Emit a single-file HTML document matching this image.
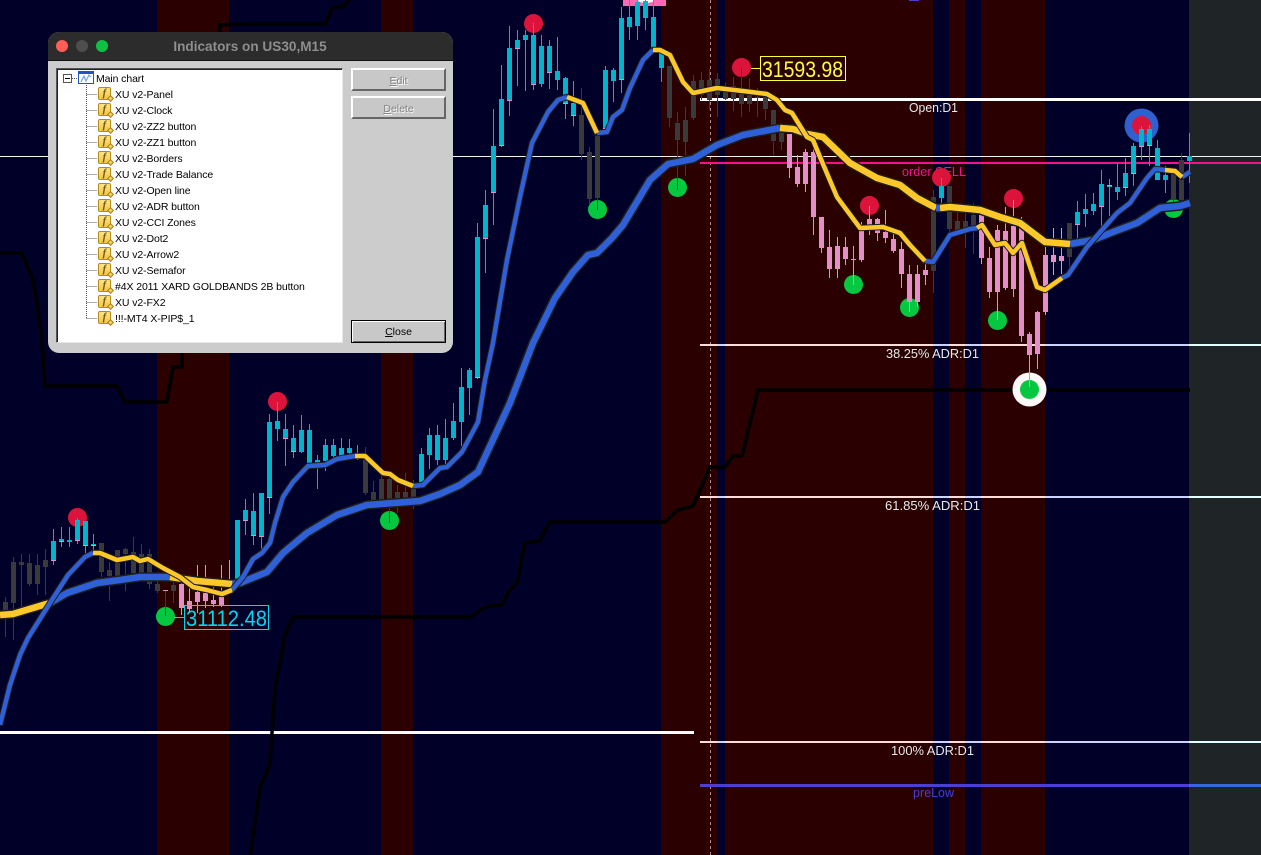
<!DOCTYPE html>
<html lang="en">
<head>
<meta charset="utf-8">
<title>Indicators on US30,M15</title>
<style>
html,body{margin:0;padding:0;width:1261px;height:855px;overflow:hidden;background:#000028}
svg.c{position:absolute;left:0;top:0}
svg.c text{font-family:"Liberation Sans",sans-serif}
#dlg{position:absolute;left:48px;top:32px;width:405px;height:321px;background:#cccccc;border-radius:11px;overflow:hidden;font-family:"Liberation Sans",sans-serif;color:#000}
#bar{position:absolute;left:0;top:0;width:405px;height:28px;background:#2c2c2c;border-bottom:1px solid #111;box-sizing:content-box}
#ttl{position:absolute;left:0;top:7px;width:404px;text-align:center;font-size:13.6px;font-weight:bold;line-height:15px;color:#8e8e8e}
.d{position:absolute;top:8px;width:12px;height:12px;border-radius:50%}
#tree{position:absolute;left:8px;top:36px;width:287px;height:275px;box-sizing:border-box;background:#fff;border:1px solid;border-color:#555 #e8e8e8 #e8e8e8 #555;box-shadow:inset 1px 1px 0 #222}
.r{position:absolute;font-size:10.5px;line-height:14px;margin-top:1px;white-space:nowrap;letter-spacing:-.1px}
.i{position:absolute;left:41px;width:13px;height:13px;box-sizing:border-box;background:linear-gradient(#fde68a,#f2c64a);border:1px solid #b88a1c;border-radius:2px;font:italic bold 11px/11px "Liberation Serif",serif;color:#7a5a10;text-align:center}
.i:after{content:"";position:absolute;right:-3px;bottom:-2px;width:5px;height:5px;box-sizing:border-box;background:#f6cf55;border:1px solid #a87f1c;transform:rotate(45deg)}
.b{position:absolute;left:303px;width:95px;height:23px;box-sizing:border-box;background:#c8c8c8;border:2px solid;border-color:#fff #666 #666 #fff;font-size:10.5px;line-height:22px;text-align:center}
.dis{color:#808080;text-shadow:1px 1px 0 #fff}
</style>
</head>
<body>
<svg class="c" width="1261" height="855" viewBox="0 0 1261 855" xmlns="http://www.w3.org/2000/svg">
<rect width="1261" height="855" fill="#000028"/>
<g fill="#2b0000" shape-rendering="crispEdges">
<rect x="157" width="72" height="855"/><rect x="381" width="32" height="855"/><rect x="661" width="56" height="855"/><rect x="725" width="208" height="855"/><rect x="949" width="16" height="855"/><rect x="981" width="64" height="855"/>
</g>
<rect x="1189" width="72" height="855" fill="#1f2526"/>
<path d="M710.5 0V855" stroke="#b58a8a" stroke-width="1" stroke-dasharray="3 3" shape-rendering="crispEdges"/>

<g fill="none" shape-rendering="crispEdges">
<path d="M0 156.5H1261" stroke="#f2f2f2" stroke-width="1"/>
<path d="M700 99.5H1261" stroke="#fff" stroke-width="3"/>
<path d="M700 163H1261" stroke="#f0148c" stroke-width="2"/>
<path d="M700 345H1261M700 497H1261M700 742H1261" stroke="#ffdcd5" stroke-width="2"/>
<path d="M717 345h8M933 345h16M965 345h16M1045 345h144M717 497h8M933 497h16M965 497h16M1045 497h144M717 742h8M933 742h16M965 742h16M1045 742h144" stroke="#c8d4ff" stroke-width="2"/>
<path d="M1189 345h72M1189 497h72M1189 742h72" stroke="#e4ffff" stroke-width="2"/>
<path d="M700 785.5H1189" stroke="#4a3fd0" stroke-width="3"/>
<path d="M1189 785.5h72" stroke="#3468dc" stroke-width="3"/>
<path d="M0 732.5H694" stroke="#fff" stroke-width="3"/>
<path d="M909 0.5h10" stroke="#4a3fd0" stroke-width="1"/>
</g>

<g font-size="13" fill="#e8e8e8">
<text x="909" y="112" textLength="49" lengthAdjust="spacingAndGlyphs">Open:D1</text>
<text x="886" y="358" textLength="93" lengthAdjust="spacingAndGlyphs">38.25% ADR:D1</text>
<text x="885" y="510" textLength="95" lengthAdjust="spacingAndGlyphs">61.85% ADR:D1</text>
<text x="891" y="755" textLength="83" lengthAdjust="spacingAndGlyphs">100% ADR:D1</text>
<text x="913" y="797" textLength="41" lengthAdjust="spacingAndGlyphs" fill="#4a3fd0">preLow</text>
<text x="902" y="176" textLength="64" lengthAdjust="spacingAndGlyphs" fill="#f0148c">order SELL</text>
</g>

<path d="M220 32V25L245 24H325L333 7H343L351 -2M0 253H22L32 277L37 303L42 340L45 386H117L125 402H167L173 367H182V345M250 857L260 787L270 765L272 733L275 687L280 663L285 635L293 617H471L485 607L502 605L509 591L517 583L525 543L540 541L550 522H665L678 510L693 506L710 467H725L733 456H742L758 390H1190" fill="none" stroke="#000" stroke-width="3.5" stroke-linejoin="round"/>

<rect x="623" y="0" width="43" height="6" fill="#ff69b4"/>
<ellipse cx="646" cy="0" rx="8" ry="3" fill="#fff"/>

<g fill="#dc143c">
<circle cx="533.5" cy="23.5" r="9.5"/><circle cx="741.5" cy="67.5" r="9.5"/><circle cx="77.5" cy="517.5" r="9.5"/><circle cx="277.5" cy="401.5" r="9.5"/><circle cx="869.5" cy="205.5" r="9.5"/><circle cx="941.5" cy="177.5" r="9.5"/><circle cx="1013.5" cy="198.5" r="9.5"/>
</g>
<circle cx="1141.5" cy="125.5" r="17" fill="#3060d0"/><circle cx="1141.5" cy="125.5" r="9.5" fill="#dc143c"/>
<circle cx="1029.5" cy="389.5" r="17" fill="#fff8f8"/>
<g fill="#05c840">
<circle cx="1029.5" cy="389.5" r="9.5"/><circle cx="597.5" cy="209.5" r="9.5"/><circle cx="677.5" cy="187.5" r="9.5"/><circle cx="165.5" cy="616.5" r="9.5"/><circle cx="389.5" cy="520.5" r="9.5"/><circle cx="853.5" cy="284.5" r="9.5"/><circle cx="909.5" cy="307.5" r="9.5"/><circle cx="997.5" cy="320.5" r="9.5"/><circle cx="1173.5" cy="208.5" r="9.5"/>
</g>

<g fill="none" shape-rendering="crispEdges">
<!-- dark wicks -->
<path stroke="#3a3a3a" stroke-width="1" d="M5.5 597V637M13.5 557V640M21.5 554V607M29.5 554V586M37.5 554V595M45.5 549V595M101.5 543V577M109.5 562V601M117.5 550V578M125.5 548V591M133.5 537V576M141.5 544V578M149.5 549V589M157.5 575V593M165.5 590V616M173.5 575V603M365.5 447V495M373.5 481V505M381.5 475V502M389.5 475V523M397.5 485V513M405.5 473V500M413.5 480V509M581.5 88V160M589.5 147V205M597.5 130V210M669.5 66V127M677.5 112V190M685.5 107V176M693.5 75V120M701.5 72V100M709.5 69V110M717.5 73V117M725.5 83V100M733.5 77V111M741.5 68V117M749.5 78V112M757.5 88V117M765.5 90V120M773.5 110V155M781.5 130V150M933.5 190V293M949.5 186V240M957.5 205V236M965.5 205V248M973.5 203V254M1069.5 223V268M1173.5 170V205M1181.5 153V205"/>
<!-- dark bodies -->
<path stroke="#3a3a3a" stroke-width="5" d="M5.5 602V611M13.5 562V603M21.5 562V565M29.5 563V584M37.5 565V584M45.5 560V567M101.5 543V572M109.5 570V576M117.5 550V576M125.5 549V554M133.5 552V573M141.5 554V573M149.5 554V584M157.5 584V591M173.5 585V591M365.5 458V493M373.5 492V500M381.5 479V500M389.5 479V500M397.5 492V498M405.5 492V498M413.5 488V497M581.5 115V154M589.5 152V199M597.5 134V198M669.5 66V118M677.5 123V140M685.5 120V142M693.5 81V118M701.5 80V95M709.5 80V100M717.5 79V95M725.5 88V99M733.5 86V99M741.5 92V104M749.5 95V104M757.5 97V98M765.5 97V109M773.5 110V141M781.5 130V142M933.5 197V271M949.5 186V229M957.5 221V230M965.5 221V229M973.5 215V228M1069.5 223V257M1173.5 170V200M1181.5 160V200"/>
<!-- pink wicks -->
<path stroke="#e38fc8" stroke-width="1" d="M181.5 580V615M189.5 587V613M197.5 565V613M205.5 565V608M213.5 581V607M221.5 565V607M229.5 560V583M789.5 134V178M797.5 155V187M805.5 149V192M813.5 149V235M821.5 217V253M829.5 230V278M837.5 237V278M845.5 237V265M853.5 246V285M861.5 222V262M869.5 206V235M877.5 218V241M885.5 210V243M893.5 234V253M901.5 242V288M909.5 265V312M917.5 265V307M925.5 263V285M981.5 215V264M989.5 247V298M997.5 225V320M1005.5 207V290M1013.5 200V297M1021.5 217V342M1029.5 332V387M1037.5 311V369M1045.5 247V315M1053.5 228V275M1061.5 228V274"/>
<!-- pink bodies -->
<path stroke="#e38fc8" stroke-width="5" d="M181.5 584V608M189.5 601V609M197.5 592V602M205.5 593V601M213.5 600V604M221.5 597V605M789.5 134V168M797.5 167V184M805.5 152V184M813.5 152V217M821.5 217V248M829.5 247V269M837.5 246V269M845.5 247V259M853.5 259V260M861.5 230V260M869.5 219V225M877.5 219V233M885.5 232V238M893.5 239V251M901.5 249V274M909.5 274V302M917.5 274V302M925.5 270V275M981.5 215V258M989.5 258V292M997.5 230V292M1005.5 231V288M1013.5 226V289M1021.5 227V336M1029.5 334V355M1037.5 312V354M1045.5 255V312M1053.5 255V262M1061.5 256V261M165.5 590V591"/>
<!-- cyan wicks -->
<path stroke="#00b4cc" stroke-width="1" d="M53.5 529V565M61.5 527V547M69.5 527V547M77.5 518V544M85.5 521V554M93.5 534V555M237.5 520V582M245.5 499V535M253.5 493V545M261.5 493V553M269.5 414V514M277.5 402V441M285.5 414V466M293.5 425V458M301.5 415V453M309.5 424V465M317.5 455V489M325.5 439V471M333.5 439V460M341.5 438V458M349.5 439V455M357.5 445V460M421.5 448V485M429.5 428V469M437.5 425V465M445.5 419V465M453.5 403V440M461.5 368V446M469.5 368V415M477.5 223V379M485.5 190V273M493.5 109V225M501.5 65V147M509.5 26V116M517.5 30V86M525.5 30V91M533.5 23V90M541.5 35V87M549.5 40V89M557.5 37V90M565.5 77V119M573.5 81V126M605.5 66V130M613.5 68V102M621.5 7V93M629.5 0V40M637.5 0V40M645.5 0V30M653.5 0V50M661.5 50V82M941.5 178V203M1077.5 201V239M1085.5 194V227M1093.5 193V215M1101.5 170V227M1109.5 179V216M1117.5 163V200M1125.5 158V196M1133.5 143V186M1141.5 126V160M1149.5 125V166M1157.5 140V180M1165.5 166V193M1189.5 133V183"/>
<!-- cyan bodies -->
<path stroke="#00b4cc" stroke-width="5" d="M53.5 541V561M61.5 539V542M69.5 540V542M77.5 520V541M85.5 521V546M93.5 544V546M237.5 520V580M245.5 510V521M253.5 511V536M261.5 493V537M269.5 422V498M277.5 421V429M285.5 429V439M293.5 438V452M301.5 430V452M309.5 430V463M317.5 460V464M325.5 445V461M333.5 445V456M341.5 448V456M349.5 448V453M357.5 453V456M421.5 454V483M429.5 435V455M437.5 435V460M445.5 438V460M453.5 421V438M461.5 387V422M469.5 370V388M477.5 237V378M485.5 205V239M493.5 146V193M501.5 99V146M509.5 48V101M517.5 40V49M525.5 35V40M533.5 35V85M541.5 46V84M549.5 46V73M557.5 71V80M565.5 78V104M573.5 103V116M605.5 70V129M613.5 70V81M621.5 18V80M629.5 17V27M637.5 2V26M645.5 1V18M653.5 17V48M661.5 53V68M941.5 186V198M1077.5 212V225M1085.5 209V214M1093.5 204V211M1101.5 184V207M1109.5 185V187M1117.5 187V192M1125.5 173V188M1133.5 146V174M1141.5 129V147M1149.5 129V146M1157.5 148V180M1165.5 175V180M1189.5 156V161"/>
<!-- pink bottom edge on cyan bodies -->
<path stroke="#e38fc8" stroke-width="1" d="M51 560.5h5M59 541.5h5M75 540.5h5M83 545.5h5M91 545.5h5M243 520.5h5M251 535.5h5M259 536.5h5M267 497.5h5M283 438.5h5M291 451.5h5M475 377.5h5M483 238.5h5M491 192.5h5M499 145.5h5M507 100.5h5M515 48.5h5M531 84.5h5M547 72.5h5M563 103.5h5M571 115.5h5M603 128.5h5M619 79.5h5M1075 224.5h5M1099 206.5h5M1107 185.5h5M1123 187.5h5M1131 173.5h5M1139 146.5h5M1147 145.5h5"/>
</g>

<g fill="none" stroke-linejoin="round" stroke-linecap="butt">
<!-- slow line -->
<path stroke="#1e1e1e" stroke-width="9.5" d="M0 615L13 614L43 605L50 603L67 593L97 583L120 580L140 577L170 577L197 581L232 584L240 583L267 572L283 553L307 533L337 515L367 505L420 501L440 494L460 485L478 472L510 403L533 343L555 298L573 272L588 255L597 253L612 238L623 225L650 180L668 164L693 159L717 145L743 135L780 128L793 129L807 134L823 137L850 163L877 178L900 185L917 198L937 208L950 207L980 210L1000 217L1020 223L1045 242L1070 244L1093 240L1113 232L1137 223L1160 208L1180 206L1190 203"/>
<g stroke="#2f60d8" stroke-width="6.5">
<path d="M50 603L67 593L97 583L120 580L140 577L170 577"/>
<path d="M232 584L240 583L267 572L283 553L307 533L337 515L367 505L420 501L440 494L460 485L478 472L510 403L533 343L555 298L573 272L588 255L597 253L612 238L623 225L650 180L668 164L693 159L717 145L743 135L780 128"/>
<path d="M1070 244L1093 240L1113 232L1137 223L1160 208L1180 206L1190 203"/>
</g>
<g stroke="#ffc82a" stroke-width="6.5">
<path d="M0 615L13 614L43 605L50 603"/>
<path d="M170 577L197 581L232 584"/>
<path d="M780 128L793 129L807 134L823 137L850 163L877 178L900 185L917 198L936 208"/>
<path d="M940 208L950 207L980 210L1000 217L1020 223L1045 242L1070 244"/>
</g>
<path stroke="#2f60d8" stroke-width="6.5" d="M936 208H940"/>
<!-- fast line -->
<path stroke="#1e1e1e" stroke-width="6.5" d="M0 725L10 685L20 655L28 638L50 603L68 575L85 557L93 553L100 553L117 560L133 557L140 561L148 559L163 568L180 577L193 587L207 590L222 594L232 590L243 577L253 559L262 553L270 543L275 523L283 497L293 482L308 466L325 465L337 459L355 456L365 456L383 473L390 474L398 480L413 486L423 485L440 468L447 467L462 452L478 422L485 380L493 343L507 260L520 197L532 143L548 112L558 100L567 97L583 103L597 133L607 132L613 117L622 110L630 88L643 60L653 50L660 50L670 55L683 82L693 93L717 88L743 91L767 94L777 100L785 110L792 113L807 137L813 140L820 157L837 197L860 228L883 227L900 233L910 245L925 261L933 262L950 235L970 229L977 228L982 225L995 245L1005 243L1013 253L1022 243L1037 287L1045 290L1062 278L1068 275L1087 247L1117 213L1130 203L1147 178L1155 169L1165 170L1175 171L1182 177L1190 172"/>
<g stroke="#2f60d8" stroke-width="4.5">
<path d="M0 725L10 685L20 655L28 638L50 603L68 575L85 557L93 553"/>
<path d="M232 590L243 577L253 559L262 553L270 543L275 523L283 497L293 482L308 466L325 465L337 459L355 456"/>
<path d="M413 486L423 485L440 468L447 467L462 452L478 422L485 380L493 343L507 260L520 197L532 143L548 112L558 100L567 97"/>
<path d="M597 133L607 132L613 117L622 110L630 88L643 60L653 50"/>
<path d="M925 261L933 262L950 235L970 229L977 228"/>
<path d="M1062 278L1068 275L1087 247L1117 213L1130 203L1147 178L1155 169L1165 170"/>
<path d="M1182 177L1190 172"/>
</g>
<g stroke="#ffc82a" stroke-width="4.5">
<path d="M93 553L100 553L117 560L133 557L140 561L148 559L163 568L180 577L193 587L207 590L222 594L232 590"/>
<path d="M355 456L365 456L383 473L390 474L398 480L413 486"/>
<path d="M567 97L583 103L597 133"/>
<path d="M653 50L660 50L670 55L683 82L693 93L717 88L743 91L767 94L777 100L785 110L792 113L807 137L813 140L820 157L837 197L860 228L883 227L900 233L910 245L925 261"/>
<path d="M977 228L982 225L995 245L1005 243L1013 253L1022 243L1037 287L1045 290L1062 278"/>
<path d="M1165 170L1175 171L1182 177"/>
</g>
</g>

<path d="M751 68.5H760" stroke="#ffff40" stroke-width="1"/>
<rect x="760.5" y="56.5" width="85" height="24" fill="none" stroke="#ffff40" stroke-width="1"/>
<text x="762" y="77" font-size="22" fill="#ffff40" textLength="81" lengthAdjust="spacingAndGlyphs">31593.98</text>
<path d="M174 617.5H184" stroke="#00d8f0" stroke-width="1"/>
<rect x="184.5" y="605.5" width="84" height="24" fill="none" stroke="#00d8f0" stroke-width="1"/>
<text x="186" y="626" font-size="22" fill="#00d8f0" textLength="81" lengthAdjust="spacingAndGlyphs">31112.48</text>
</svg>

<div id="dlg">
<div id="bar"></div>
<div class="d" style="left:8px;background:#ff5f57"></div>
<div class="d" style="left:28px;background:#4e4e4e"></div>
<div class="d" style="left:48px;background:#0cc144"></div>
<div id="ttl">Indicators on US30,M15</div>

<div id="tree">
<svg width="285" height="273" style="position:absolute;left:0;top:0" xmlns="http://www.w3.org/2000/svg">
<g fill="none" stroke="#555" stroke-dasharray="1 1" shape-rendering="crispEdges">
<path d="M29.5 16V249.5M29.5 25.5H40M29.5 41.5H40M29.5 57.5H40M29.5 73.5H40M29.5 89.5H40M29.5 105.5H40M29.5 121.5H40M29.5 137.5H40M29.5 153.5H40M29.5 169.5H40M29.5 185.5H40M29.5 201.5H40M29.5 217.5H40M29.5 233.5H40M29.5 249.5H40M15 9.5H21"/>
</g>
<rect x="6.5" y="5.5" width="8" height="8" fill="#fff" stroke="#555"/>
<path d="M8 9.5H13" stroke="#000"/>
<rect x="21.5" y="2.5" width="15" height="12" fill="#fff" stroke="#1d55c8"/>
<rect x="21" y="2" width="16" height="3" fill="#1d55c8"/>
<path d="M24 13L27 7L29 12L32 6L34 8" fill="none" stroke="#7b9fe8" stroke-width="1.2"/>
</svg>
<div class="r" style="left:39px;top:2px;">Main chart</div>
<div class="i" style="top:18px">f</div><div class="r" style="left:58px;top:18px">XU v2-Panel</div>
<div class="i" style="top:34px">f</div><div class="r" style="left:58px;top:34px">XU v2-Clock</div>
<div class="i" style="top:50px">f</div><div class="r" style="left:58px;top:50px">XU v2-ZZ2 button</div>
<div class="i" style="top:66px">f</div><div class="r" style="left:58px;top:66px">XU v2-ZZ1 button</div>
<div class="i" style="top:82px">f</div><div class="r" style="left:58px;top:82px">XU v2-Borders</div>
<div class="i" style="top:98px">f</div><div class="r" style="left:58px;top:98px">XU v2-Trade Balance</div>
<div class="i" style="top:114px">f</div><div class="r" style="left:58px;top:114px">XU v2-Open line</div>
<div class="i" style="top:130px">f</div><div class="r" style="left:58px;top:130px">XU v2-ADR button</div>
<div class="i" style="top:146px">f</div><div class="r" style="left:58px;top:146px">XU v2-CCI Zones</div>
<div class="i" style="top:162px">f</div><div class="r" style="left:58px;top:162px">XU v2-Dot2</div>
<div class="i" style="top:178px">f</div><div class="r" style="left:58px;top:178px">XU v2-Arrow2</div>
<div class="i" style="top:194px">f</div><div class="r" style="left:58px;top:194px">XU v2-Semafor</div>
<div class="i" style="top:210px">f</div><div class="r" style="left:58px;top:210px">#4X 2011 XARD GOLDBANDS 2B button</div>
<div class="i" style="top:226px">f</div><div class="r" style="left:58px;top:226px">XU v2-FX2</div>
<div class="i" style="top:242px">f</div><div class="r" style="left:58px;top:242px">!!!-MT4 X-PIP$_1</div>
</div>

<div class="b dis" style="top:36px"><u>E</u>dit</div>
<div class="b dis" style="top:64px"><u>D</u>elete</div>
<div class="b" style="top:288px;border:1px solid #000;box-shadow:inset 1px 1px 0 #fff,inset -1px -1px 0 #666;line-height:23px"><u>C</u>lose</div>
</div>
</body>
</html>
